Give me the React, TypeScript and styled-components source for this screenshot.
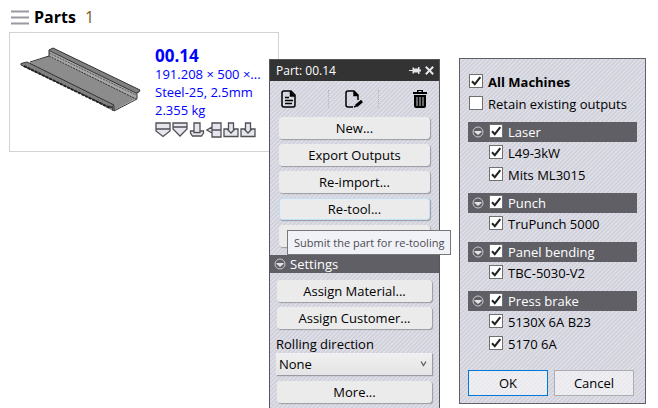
import React from "react";
import styled, { createGlobalStyle, css } from "styled-components";

const GlobalStyle = createGlobalStyle`
  * { box-sizing: border-box; }
  body {
    margin: 0;
    background: #fff;
    color: #000;
    font: 13px/20px "Open Sans", "Noto Sans", sans-serif;
  }
  button, input, select { font: inherit; color: inherit; margin: 0; }
  svg { flex: none; }
`;

const tick = `url("data:image/svg+xml,%3Csvg xmlns='http://www.w3.org/2000/svg' viewBox='0 0 12 12'%3E%3Cpath d='M2 6.2 4.8 9.2 10.3 2.2' fill='none' stroke='%23222' stroke-width='2'/%3E%3C/svg%3E")`;

const hatched = css`
  background: repeating-linear-gradient(135deg, #d1d1db 0 1px, #e4e4ec 2px, #d1d1db 3px);
`;

const Page = styled.div`
  display: flex;
  min-height: 100vh;
  max-height: 100vh;
  overflow: hidden;
  padding-left: 9px;
  padding-right: 12px;
`;

const PartsColumn = styled.main`
  flex: 1;
  min-width: 0;
  margin-right: -10px;
  padding-top: 6px;
`;

const PartsHeader = styled.header`
  display: flex;
  align-items: center;
  height: 22px;
  margin-bottom: 4px;
  padding-left: 2px;
  gap: 5px;
`;

const PartsTitle = styled.h1`
  margin: 0 4px 0 0;
  font-size: 16px;
  font-weight: 700;
  line-height: 22px;
`;

const PartsCount = styled.span`
  font-size: 16px;
  color: #7a5a2c;
`;

const PlainButton = styled.button`
  display: flex;
  padding: 0;
  border: 0;
  background: none;
`;

const PartCard = styled.article`
  display: flex;
  height: 120px;
  border: 1px solid #d3d3d3;
  padding: 13px 11px 0 10px;
  gap: 5px;
`;

const PartInfo = styled.div`
  flex: 1;
  min-width: 0;
  color: #00f;
  line-height: 18px;
`;

const PartName = styled.h2`
  margin: 0;
  font-size: 17px;
  line-height: 19px;
`;

const PartLine = styled.div`
  overflow: hidden;
  white-space: nowrap;
  text-overflow: ellipsis;
`;

const Operations = styled.div`
  display: flex;
  gap: 1px;
  margin-top: 3px;
`;

const ToolPanel = styled.aside`
  display: flex;
  flex-direction: column;
  flex: 0 0 171px;
  position: relative;
  margin-top: 59px;
  border: solid #55555c;
  border-width: 1px 1px 0;
  ${hatched}
`;

const TitleBar = styled.header`
  display: flex;
  align-items: center;
  flex: none;
  height: 21px;
  padding: 0 5px 0 6px;
  gap: 4px;
  background: #333;
  color: #fff;
  font-size: 12px;
`;

const TitleText = styled.span`
  flex: 1;
`;

const IconRow = styled.div`
  display: grid;
  flex: none;
  grid-template-columns: 58px 50px 1fr;
  align-items: center;
  height: 36px;
  padding-right: 11px;
`;

const IconCell = styled.div<{ $align: "start" | "center" | "end"; $divided?: boolean }>`
  display: flex;
  justify-content: ${(p) => p.$align};
  padding-left: ${(p) => (p.$align === "start" ? 11 : 0)}px;
  border-left: ${(p) => (p.$divided ? "1px dotted #b2b2b8" : "0")};
`;

const Actions = styled.div<{ $inset: number }>`
  display: grid;
  flex: none;
  gap: 5px;
  padding: 0 ${(p) => p.$inset}px;
`;

const ActionButton = styled.button<{ $active?: boolean }>`
  height: 22px;
  padding: 0;
  border: 1px solid ${(p) => (p.$active ? "#bfe0f5" : "#ebebeb")};
  border-radius: 3px;
  background: #ebebeb;
  box-shadow: 1px 1px 1px #9a9aa2;
  line-height: 20px;
`;

const SectionHeader = styled.h3`
  display: flex;
  align-items: center;
  flex: none;
  gap: 4px;
  height: 18px;
  margin: 8px 0 7px;
  padding-left: 4px;
  background: #5f5f65;
  color: #fff;
  font-size: 13px;
  font-weight: 400;
`;

const Field = styled.label`
  display: grid;
  margin: 1px 0 1px -1px;
  line-height: 18px;
`;

const SelectWrap = styled.span`
  display: grid;
  align-items: center;
  svg { grid-area: 1 / 1; justify-self: end; margin-right: 5px; pointer-events: none; }
`;

const Select = styled.select`
  grid-area: 1 / 1;
  width: 100%;
  height: 22px;
  padding: 0 3px;
  border: 0;
  border-radius: 0;
  appearance: none;
  background: linear-gradient(#f0f0f0, #e4e4e4);
  box-shadow: 1px 1px 1px #9a9aa2;
`;

const Tooltip = styled.div`
  position: absolute;
  top: 170px;
  left: 17px;
  height: 25px;
  padding: 0 6px;
  border: 1px solid #777;
  background: #f1f2f7;
  color: #4c4c52;
  font-size: 11px;
  line-height: 23px;
  white-space: nowrap;
`;

const MachineDialog = styled.form`
  flex: 0 0 187px;
  align-self: flex-start;
  margin: 58px 0 0 19px;
  padding: 12px 8px 7px;
  border: 1px solid #606066;
  ${hatched}
`;

const Check = styled.label<{ $bold?: boolean; $nested?: boolean }>`
  display: flex;
  align-items: center;
  gap: 5px;
  height: 22px;
  padding-left: ${(p) => (p.$nested ? 21 : 1)}px;
  font-weight: ${(p) => (p.$bold ? 700 : 400)};
  white-space: nowrap;
`;

const CheckInput = styled.input`
  appearance: none;
  flex: none;
  width: 14px;
  height: 14px;
  margin-bottom: 2px;
  border: 1px solid #707070;
  background: #fff;
  &:checked { background: #fff ${tick} center / 12px 12px no-repeat; }
`;

const Group = styled.section`
  margin-top: 7px;
`;

const GroupHeader = styled.header`
  display: flex;
  align-items: center;
  height: 20px;
  padding-left: 4px;
  gap: 4px;
  background: #5f5f65;
  color: #fff;
`;

const DialogButtons = styled.footer`
  display: flex;
  gap: 6px;
  margin-top: 15px;
  padding-right: 3px;
`;

const DialogButton = styled.button<{ $primary?: boolean }>`
  flex: 1;
  height: 26px;
  padding: 0;
  border: 1px solid ${(p) => (p.$primary ? "#0078d7" : "#adadb3")};
  background: rgba(255, 255, 255, 0.5);
`;

const MenuIcon = () => (
  <svg width="18" height="15" viewBox="0 0 18 15" stroke="#9a9aa2" strokeWidth="2">
    <path d="M0 1.5h18M0 7.5h18M0 13.5h18" />
  </svg>
);

const PartDrawing = () => (
  <svg width="130" height="70" viewBox="0 0 130 70" stroke="#333" strokeWidth="1" strokeLinejoin="round">
    <path d="M6 18 29 10 117 52 93 65z" fill="#8c8c8c" stroke="none" />
    <path d="M10 16 29 10" />
    <path d="M29 5 117 47v6L29 10z" fill="#a6a6a6" stroke="none" />
    <path d="M29 10 116 53" strokeDasharray="2 1" />
    <path d="M29 7 116 49" stroke="#555" strokeDasharray="2 1" />
    <path d="M29 10V4l4-2 87 42-1 2-3 1L30 5" fill="#808080" />
    <path d="M117 47v6L94 65v-5" fill="none" />
    <path d="M1 19q-1-2 2-2l4-1 87 43-3 3z" fill="#808080" />
    <path d="M4 20 90 62" stroke="#222" strokeWidth="2" strokeDasharray="3 1" />
    <path d="m88 60 4 1 1 4" fill="none" />
  </svg>
);

const operationPaths = [
  "M1 1h14v8L8 14.500 1 9zM1 7h14",
  "M1 1h14v6L8 14 1 7zM1 5h14",
  "M5 1h6v8h3.500v2l-2 3h-9l-2-3V9H5zM5 9v1.500h6V9",
  "M15 1v14H6v-4L1 8l5-3V1zM6 8h9M6 5v6",
  "M1 7h3l4 4 4-4h3v7.500H1zM5.500 1h5v6H12l-4 4-4-4h1.500z",
  "M1 7h3l4 4 4-4h3v7.500H1zM5.500 1h5v6H12l-4 4-4-4h1.500z",
];

const OperationIcon = ({ d }: { d: string }) => (
  <svg width="16" height="16" viewBox="0 0 16 16" fill="#e6e6ee" stroke="#505055" strokeWidth="1.3">
    <path d={d} />
  </svg>
);

const DocumentIcon = () => (
  <svg width="16" height="18" viewBox="0 0 16 18" fill="none" stroke="#000" strokeWidth="1.5">
    <path d="M3 1h7l4 4v10q0 2-2 2H3q-2 0-2-2V3q0-2 2-2z" />
    <path d="M9.500 1v5H14" fill="#000" />
    <path d="M4 7.500h4M4 10.500h8M4 13.500h7" />
  </svg>
);

const EditIcon = () => (
  <svg width="18" height="18" viewBox="0 0 18 18" fill="none" stroke="#000" strokeWidth="1.500">
    <path d="M8 17H3q-2 0-2-2V3q0-2 2-2h6l4 4v5" />
    <path d="M9 1v4.500h4" fill="#000" />
    <path d="m11 16 6-5" strokeWidth="3" />
    <path d="m9 17 2-1" />
  </svg>
);

const TrashIcon = () => (
  <svg width="16" height="18" viewBox="0 0 16 18">
    <path d="M5 2V0h6v2h4v2H1V2zM6.500 1v1h3V1zM2 5h12v11q0 2-2 2H4q-2 0-2-2z" fillRule="evenodd" />
    <path d="M5 7v9M8 7v9M11 7v9" stroke="#ccccd4" />
  </svg>
);

const PinIcon = () => (
  <svg width="12" height="9" viewBox="0 0 12 9" fill="#e6e6ea">
    <path d="M0 4h3.500V1.500H5v1h4V1h1.500v2.500H12v2h-1.500V8H9V6.500H5v1H3.500V5H0z" />
  </svg>
);

const CloseIcon = () => (
  <svg width="9" height="9" viewBox="0 0 9 9" stroke="#e6e6ea" strokeWidth="2">
    <path d="m.8.8 7.400 7.400M8.200.8.8 8.200" />
  </svg>
);

const ExpanderIcon = () => (
  <svg width="12" height="12" viewBox="0 0 12 12" fill="none" stroke="#c9c9cf">
    <circle cx="6" cy="6" r="5" />
    <path d="M2.500 5h7v1L6 9 2.500 6z" fill="#e4e4e8" stroke="none" />
  </svg>
);

const ChevronIcon = () => (
  <svg width="7" height="6" viewBox="0 0 7 6" fill="none" stroke="#606060" strokeWidth="1.300">
    <path d="M1 .5 3.500 4.500 6 .5" />
  </svg>
);

const machineGroups = [
  { name: "Laser", machines: ["L49-3kW", "Mits ML3015"] },
  { name: "Punch", machines: ["TruPunch 5000"] },
  { name: "Panel bending", machines: ["TBC-5030-V2"] },
  { name: "Press brake", machines: ["5130X 6A B23", "5170 6A"] },
];

export default function App() {
  return (
    <>
      <GlobalStyle />
      <Page>
        <PartsColumn>
          <PartsHeader>
            <PlainButton aria-label="Menu"><MenuIcon /></PlainButton>
            <PartsTitle>Parts</PartsTitle>
            <PartsCount>1</PartsCount>
          </PartsHeader>
          <PartCard>
            <PartDrawing />
            <PartInfo>
              <PartName>00.14</PartName>
              <PartLine>191.208 × 500 ×...</PartLine>
              <PartLine>Steel-25, 2.5mm</PartLine>
              <PartLine>2.355 kg</PartLine>
              <Operations>
                {operationPaths.map((d, i) => <OperationIcon key={i} d={d} />)}
              </Operations>
            </PartInfo>
          </PartCard>
        </PartsColumn>

        <ToolPanel>
          <TitleBar>
            <TitleText>Part: 00.14</TitleText>
            <PlainButton aria-label="Pin"><PinIcon /></PlainButton>
            <PlainButton aria-label="Close"><CloseIcon /></PlainButton>
          </TitleBar>
          <IconRow>
            <IconCell $align="start">
              <PlainButton aria-label="Report"><DocumentIcon /></PlainButton>
            </IconCell>
            <IconCell $align="center" $divided>
              <PlainButton aria-label="Edit"><EditIcon /></PlainButton>
            </IconCell>
            <IconCell $align="end" $divided>
              <PlainButton aria-label="Delete"><TrashIcon /></PlainButton>
            </IconCell>
          </IconRow>
          <Actions $inset={9}>
            <ActionButton>New...</ActionButton>
            <ActionButton>Export Outputs</ActionButton>
            <ActionButton>Re-import...</ActionButton>
            <ActionButton $active aria-describedby="tip">Re-tool...</ActionButton>
            <ActionButton aria-label="More actions" />
          </Actions>
          <SectionHeader><ExpanderIcon />Settings</SectionHeader>
          <Actions $inset={7}>
            <ActionButton>Assign Material...</ActionButton>
            <ActionButton>Assign Customer...</ActionButton>
            <Field>
              Rolling direction
              <SelectWrap>
                <Select defaultValue="None"><option>None</option></Select>
                <ChevronIcon />
              </SelectWrap>
            </Field>
            <ActionButton>More...</ActionButton>
          </Actions>
          <Tooltip id="tip" role="tooltip">Submit the part for re-tooling</Tooltip>
        </ToolPanel>

        <MachineDialog onSubmit={(e) => e.preventDefault()}>
          <Check $bold><CheckInput type="checkbox" defaultChecked />All Machines</Check>
          <Check><CheckInput type="checkbox" />Retain existing outputs</Check>
          {machineGroups.map((g) => (
            <Group key={g.name}>
              <GroupHeader>
                <PlainButton type="button" aria-label={`Collapse ${g.name}`}><ExpanderIcon /></PlainButton>
                <Check><CheckInput type="checkbox" defaultChecked />{g.name}</Check>
              </GroupHeader>
              {g.machines.map((m) => (
                <Check key={m} $nested><CheckInput type="checkbox" defaultChecked />{m}</Check>
              ))}
            </Group>
          ))}
          <DialogButtons>
            <DialogButton $primary type="submit">OK</DialogButton>
            <DialogButton type="button">Cancel</DialogButton>
          </DialogButtons>
        </MachineDialog>
      </Page>
    </>
  );
}
